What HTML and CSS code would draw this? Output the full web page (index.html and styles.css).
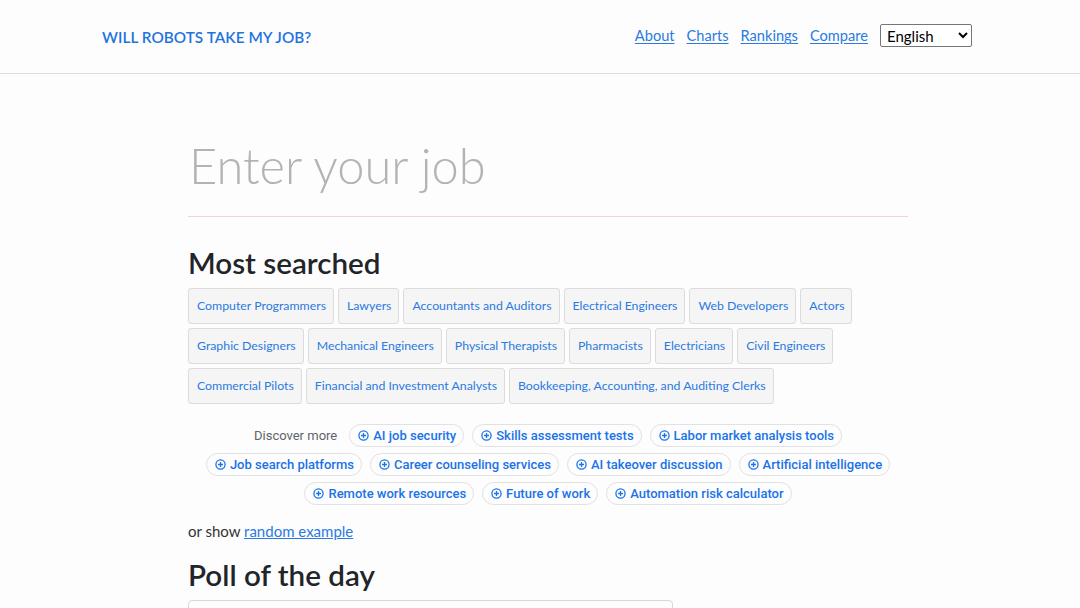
FILE: index.html
```html
<!DOCTYPE html>
<html lang="en">
<head>
<meta charset="utf-8">
<title>Will Robots Take My Job?</title>
<link rel="stylesheet" href="styles.css">
</head>
<body>
<header class="topbar">
  <div class="topbar-inner">
    <a class="brand" href="#">WILL ROBOTS TAKE MY JOB?</a>
    <nav class="nav">
      <a href="#">About</a>
      <a href="#">Charts</a>
      <a href="#">Rankings</a>
      <a href="#">Compare</a>
      <select class="lang"><option>English</option></select>
    </nav>
  </div>
</header>
<main class="main">
  <div class="search">
    <input class="search-input" type="text" placeholder="Enter your job">
  </div>
  <h2 class="heading">Most searched</h2>
  <div class="chips">
    <a class="chip" href="#">Computer Programmers</a>
    <a class="chip" href="#">Lawyers</a>
    <a class="chip" href="#">Accountants and Auditors</a>
    <a class="chip" href="#">Electrical Engineers</a>
    <a class="chip" href="#">Web Developers</a>
    <a class="chip" href="#">Actors</a>
    <a class="chip" href="#">Graphic Designers</a>
    <a class="chip" href="#">Mechanical Engineers</a>
    <a class="chip" href="#">Physical Therapists</a>
    <a class="chip" href="#">Pharmacists</a>
    <a class="chip" href="#">Electricians</a>
    <a class="chip" href="#">Civil Engineers</a>
    <a class="chip" href="#">Commercial Pilots</a>
    <a class="chip" href="#">Financial and Investment Analysts</a>
    <a class="chip" href="#">Bookkeeping, Accounting, and Auditing Clerks</a>
  </div>
  <div class="discover">
    <span class="discover-label">Discover more</span>
    <a class="pill" href="#"><svg viewBox="0 0 12 12"><circle cx="6" cy="6" r="5"/><path d="M6 3.3v5.4M3.3 6h5.4"/></svg>AI job security</a>
    <a class="pill" href="#"><svg viewBox="0 0 12 12"><circle cx="6" cy="6" r="5"/><path d="M6 3.3v5.4M3.3 6h5.4"/></svg>Skills assessment tests</a>
    <a class="pill" href="#"><svg viewBox="0 0 12 12"><circle cx="6" cy="6" r="5"/><path d="M6 3.3v5.4M3.3 6h5.4"/></svg>Labor market analysis tools</a>
    <a class="pill" href="#"><svg viewBox="0 0 12 12"><circle cx="6" cy="6" r="5"/><path d="M6 3.3v5.4M3.3 6h5.4"/></svg>Job search platforms</a>
    <a class="pill" href="#"><svg viewBox="0 0 12 12"><circle cx="6" cy="6" r="5"/><path d="M6 3.3v5.4M3.3 6h5.4"/></svg>Career counseling services</a>
    <a class="pill" href="#"><svg viewBox="0 0 12 12"><circle cx="6" cy="6" r="5"/><path d="M6 3.3v5.4M3.3 6h5.4"/></svg>AI takeover discussion</a>
    <a class="pill" href="#"><svg viewBox="0 0 12 12"><circle cx="6" cy="6" r="5"/><path d="M6 3.3v5.4M3.3 6h5.4"/></svg>Artificial intelligence</a>
    <a class="pill" href="#"><svg viewBox="0 0 12 12"><circle cx="6" cy="6" r="5"/><path d="M6 3.3v5.4M3.3 6h5.4"/></svg>Remote work resources</a>
    <a class="pill" href="#"><svg viewBox="0 0 12 12"><circle cx="6" cy="6" r="5"/><path d="M6 3.3v5.4M3.3 6h5.4"/></svg>Future of work</a>
    <a class="pill" href="#"><svg viewBox="0 0 12 12"><circle cx="6" cy="6" r="5"/><path d="M6 3.3v5.4M3.3 6h5.4"/></svg>Automation risk calculator</a>
  </div>
  <p class="random">or show <a href="#">random example</a></p>
  <h2 class="heading poll-heading">Poll of the day</h2>
  <div class="poll-card"></div>
</main>
</body>
</html>
```

FILE: styles.css
```css
* { box-sizing: border-box; }
html, body { margin: 0; padding: 0; }
body {
  background: #fdfdfd;
  font-family: Lato, "Open Sans", sans-serif;
  color: #212529;
  overflow: hidden;
  height: 608px;
}
a { color: #2a7ae2; }

.topbar {
  height: 74px;
  border-bottom: 1px solid #dedede;
}
.topbar-inner {
  height: 73px;
  padding: 0 108px 2px 102px;
  display: flex;
  align-items: center;
  justify-content: space-between;
}
.brand {
  font-size: 15.3px;
  font-weight: 600;
  color: #1f73e0;
  text-decoration: none;
  letter-spacing: 0.05px;
  margin-top: 3px;
}
.nav {
  display: flex;
  align-items: center;
  gap: 12px;
}
.nav a {
  font-size: 14.6px;
  color: #2a7ae2;
  text-decoration: underline;
  text-underline-offset: 2px;
}
.lang {
  width: 92px;
  height: 23px;
  font-family: Lato, sans-serif;
  font-size: 15px;
  color: #000;
  background: #fff;
  border: 1px solid #767676;
  border-radius: 2px;
  padding: 0 2px;
}

.main {
  width: 720px;
  margin: 0 0 0 188px;
  padding-top: 56px;
}
.search {
  border-bottom: 1px solid #f0d4dc;
  height: 87px;
}
.search-input {
  width: 100%;
  height: 86px;
  border: none;
  background: transparent;
  outline: none;
  font-family: Lato, sans-serif;
  font-weight: 300;
  font-size: 48.8px;
  color: #333;
  padding: 0 0 16px 1px;
}
.search-input::placeholder { color: #b3b3b3; }

.heading {
  font-size: 29.6px;
  font-weight: 600;
  margin: 28px 0 7px;
  line-height: 36px;
  color: #212529;
}
.chips {
  display: flex;
  flex-wrap: wrap;
  gap: 4px 4px;
}
.chip {
  height: 36px;
  line-height: 34px;
  padding: 0 7px 0 8px;
  font-size: 12.3px;
  color: #2a7ae2;
  text-decoration: none;
  background: #f5f5f5;
  border: 1px solid #dcdcdc;
  border-radius: 3px;
}

.discover {
  display: flex;
  flex-wrap: wrap;
  justify-content: center;
  align-items: center;
  gap: 6px 8px;
  margin-top: 20px;
}
.discover-label {
  font-family: Roboto, sans-serif;
  font-size: 13px;
  color: #5f6368;
  margin-right: 4px;
}
.pill {
  display: inline-flex;
  align-items: center;
  gap: 4px;
  height: 23px;
  padding: 0 7px 0 8px;
  border: 1px solid #dfe1e5;
  border-radius: 12px;
  font-family: Roboto, sans-serif;
  font-weight: 500;
  font-size: 13px;
  color: #1a73e8;
  text-decoration: none;
  background: #fdfdfd;
}
.pill svg {
  width: 11px;
  height: 11px;
  fill: none;
  stroke: #1a73e8;
  stroke-width: 1.4;
}

.random {
  font-size: 15px;
  margin: 17px 0 0;
  color: #333;
}
.random a { color: #2a7ae2; }
.poll-heading { margin-top: 17px; }
.poll-card {
  margin-top: 6px;
  width: 485px;
  height: 40px;
  border: 1px solid #d8d8d8;
  border-radius: 4px;
  background: #fdfdfd;
}
```
